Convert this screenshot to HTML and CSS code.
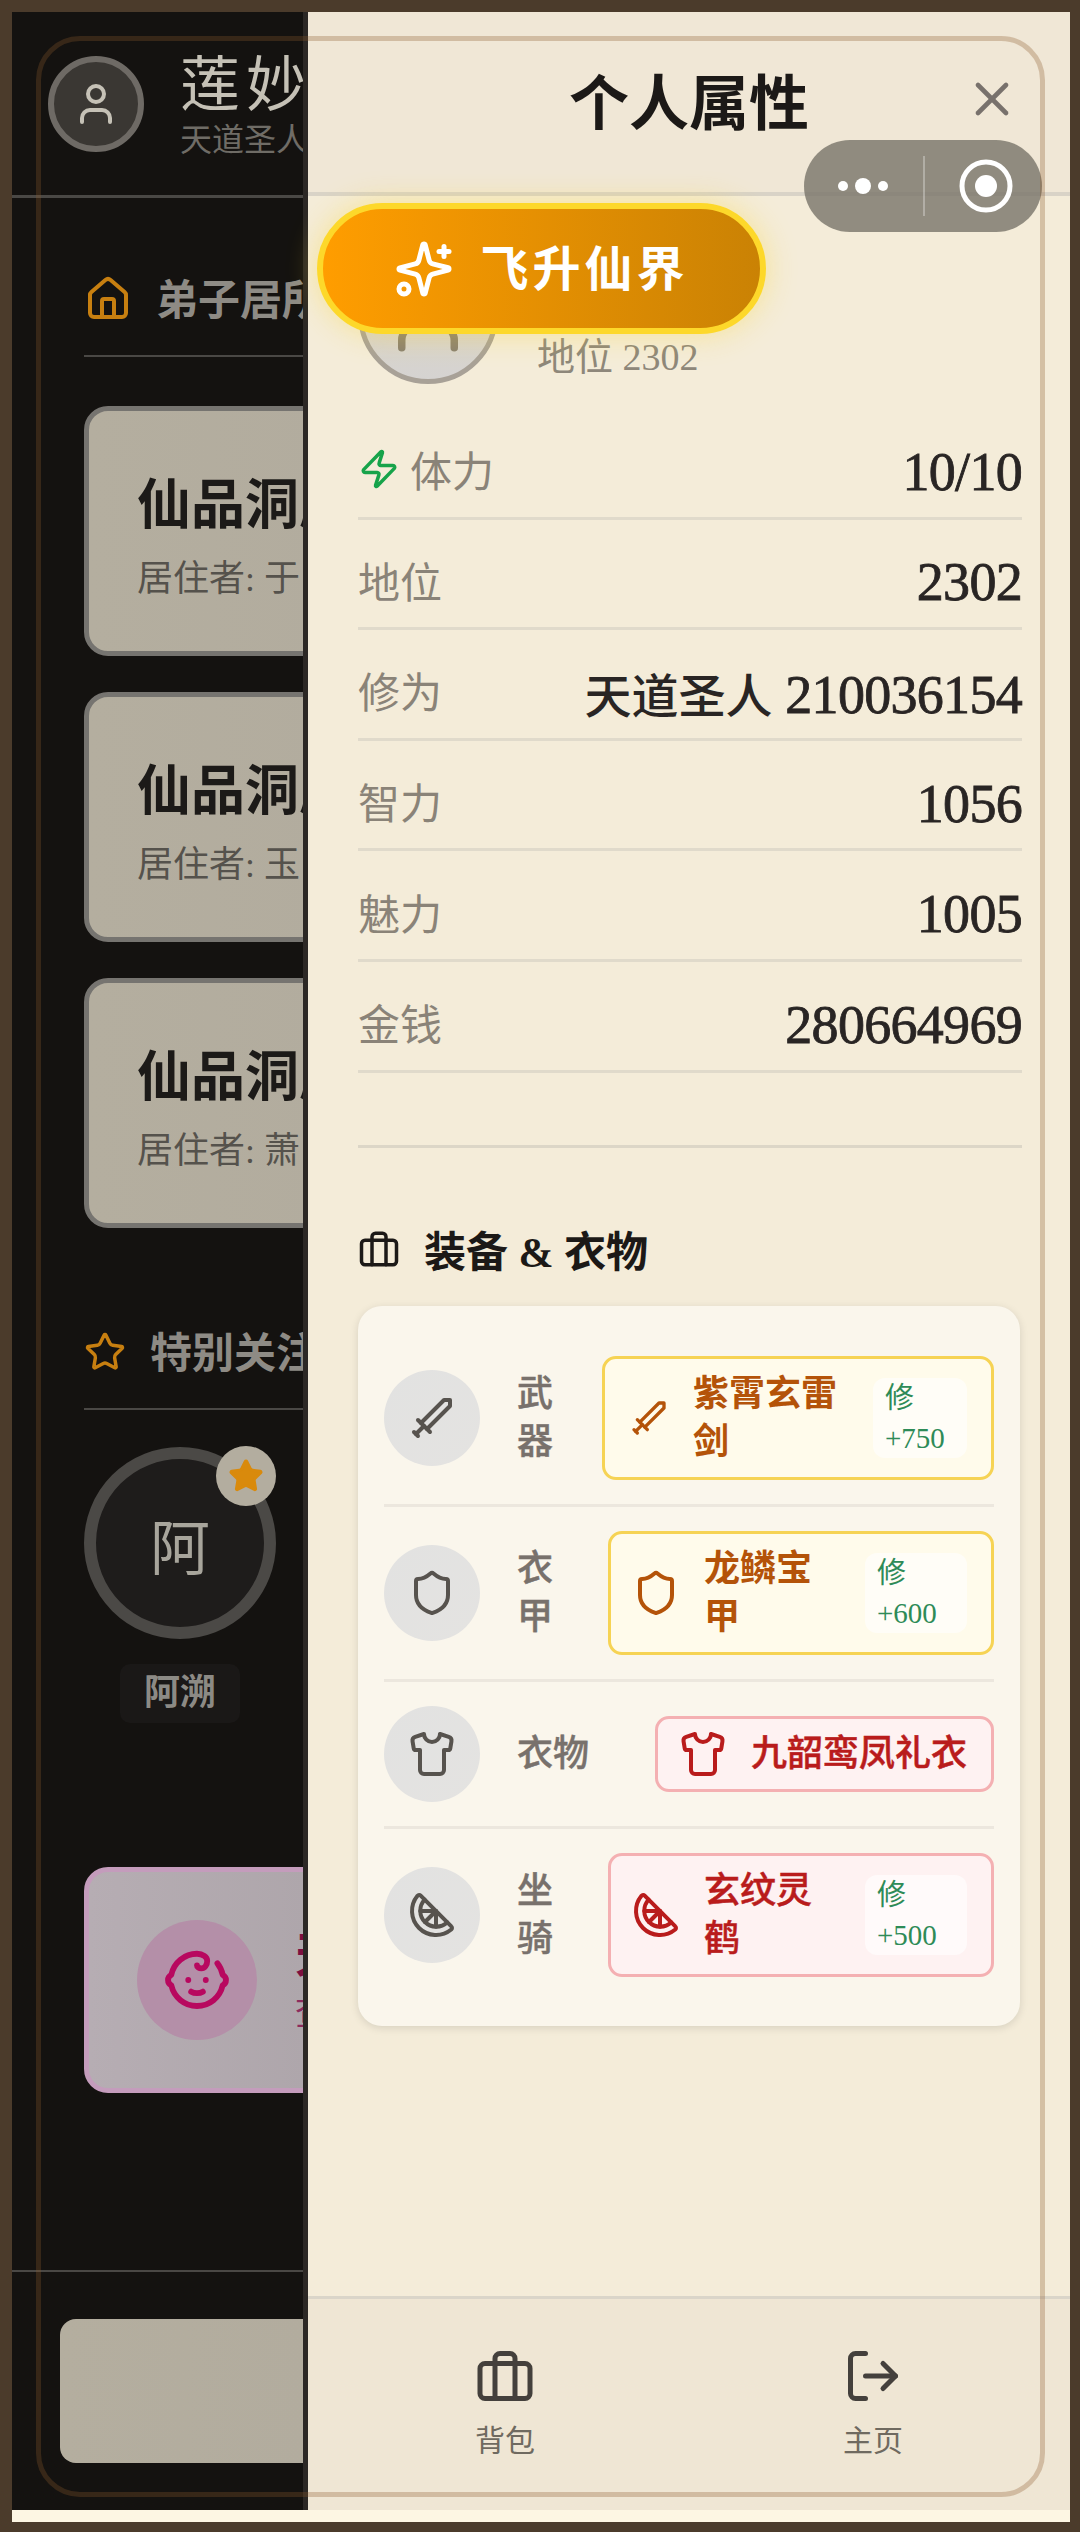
FILE: index.html
```html
<!DOCTYPE html>
<html lang="zh-CN">
<head>
    <meta charset="UTF-8">
    <meta name="viewport" content="width=device-width, initial-scale=1.0">
    <title>个人属性</title>
    <link rel="stylesheet" href="styles.css">
</head>
<body>
    <svg class="sprite" xmlns="http://www.w3.org/2000/svg">
        <symbol id="i-user" viewBox="0 0 24 24"><path d="M19 21v-2a4 4 0 0 0-4-4H9a4 4 0 0 0-4 4v2"/><circle cx="12" cy="7" r="4"/></symbol>
        <symbol id="i-home" viewBox="0 0 24 24"><path d="M15 21v-8a1 1 0 0 0-1-1h-4a1 1 0 0 0-1 1v8"/><path d="M3 10a2 2 0 0 1 .709-1.528l7-5.999a2 2 0 0 1 2.582 0l7 5.999A2 2 0 0 1 21 10v9a2 2 0 0 1-2 2H5a2 2 0 0 1-2-2z"/></symbol>
        <symbol id="i-star" viewBox="0 0 24 24"><path d="M11.525 2.295a.53.53 0 0 1 .95 0l2.31 4.679a2.123 2.123 0 0 0 1.595 1.16l5.166.756a.53.53 0 0 1 .294.904l-3.736 3.638a2.123 2.123 0 0 0-.611 1.878l.882 5.14a.53.53 0 0 1-.771.56l-4.618-2.428a2.122 2.122 0 0 0-1.973 0L6.396 21.01a.53.53 0 0 1-.77-.56l.881-5.139a2.122 2.122 0 0 0-.611-1.879L2.16 9.795a.53.53 0 0 1 .294-.906l5.165-.755a2.122 2.122 0 0 0 1.597-1.16z"/></symbol>
        <symbol id="i-baby" viewBox="0 0 24 24"><path d="M9 12h.01"/><path d="M15 12h.01"/><path d="M10 16c.5.3 1.2.5 2 .5s1.5-.2 2-.5"/><path d="M19 6.3a9 9 0 0 1 1.8 3.9 2 2 0 0 1 0 3.6 9 9 0 0 1-17.6 0 2 2 0 0 1 0-3.6A9 9 0 0 1 12 3c2 0 3.5 1.1 3.5 2.5s-.9 2.5-2 2.5c-.8 0-1.5-.4-1.5-1"/></symbol>
        <symbol id="i-close" viewBox="0 0 24 24"><path d="M18 6 6 18"/><path d="m6 6 12 12"/></symbol>
        <symbol id="i-sparkles" viewBox="0 0 24 24"><path d="M9.937 15.5A2 2 0 0 0 8.5 14.063l-6.135-1.582a.5.5 0 0 1 0-.962L8.5 9.936A2 2 0 0 0 9.937 8.5l1.582-6.135a.5.5 0 0 1 .963 0L14.063 8.5A2 2 0 0 0 15.5 9.937l6.135 1.581a.5.5 0 0 1 0 .964L15.5 14.063a2 2 0 0 0-1.437 1.437l-1.582 6.135a.5.5 0 0 1-.963 0z"/><path d="M20 3v4"/><path d="M22 5h-4"/><circle cx="4" cy="20" r="2"/></symbol>
        <symbol id="i-zap" viewBox="0 0 24 24"><path d="M4 14a1 1 0 0 1-.78-1.63l9.9-10.2a.5.5 0 0 1 .86.46l-1.92 6.02A1 1 0 0 0 13 10h7a1 1 0 0 1 .78 1.63l-9.9 10.2a.5.5 0 0 1-.86-.46l1.92-6.02A1 1 0 0 0 11 14z"/></symbol>
        <symbol id="i-briefcase" viewBox="0 0 24 24"><path d="M16 21V5a2 2 0 0 0-2-2h-4a2 2 0 0 0-2 2v16"/><rect x="2" y="7" width="20" height="14" rx="2"/></symbol>
        <symbol id="i-sword" viewBox="0 0 24 24"><g transform="matrix(-1 0 0 1 24 0)"><path d="M14.5 17.5 3 6V3h3l11.5 11.5"/><path d="m13 19 6-6"/><path d="m16 16 4 4"/><path d="m19 21 2-2"/></g></symbol>
        <symbol id="i-shield" viewBox="0 0 24 24"><path d="M20 13c0 5-3.5 7.5-7.66 8.95a1 1 0 0 1-.67-.01C7.5 20.5 4 18 4 13V6a1 1 0 0 1 1-1c2 0 4.5-1.2 6.24-2.72a1.17 1.17 0 0 1 1.52 0C14.51 3.81 17 5 19 5a1 1 0 0 1 1 1z"/></symbol>
        <symbol id="i-shirt" viewBox="0 0 24 24"><path d="M20.38 3.46 16 2a4 4 0 0 1-8 0L3.62 3.46a2 2 0 0 0-1.34 2.23l.58 3.47a1 1 0 0 0 .99.84H6v10c0 1.1.9 2 2 2h8a2 2 0 0 0 2-2V10h2.15a1 1 0 0 0 .99-.84l.58-3.47a2 2 0 0 0-1.34-2.23z"/></symbol>
        <symbol id="i-citrus" viewBox="0 0 24 24"><path d="M21.66 17.67a1.08 1.08 0 0 1-.04 1.6A12 12 0 0 1 4.73 2.38a1.1 1.1 0 0 1 1.61-.04z"/><path d="M19.65 15.66A8 8 0 0 1 8.35 4.34"/><path d="m14 10-5.5 5.5"/><path d="M14 17.85V10H6.15"/></symbol>
        <symbol id="i-logout" viewBox="0 0 24 24"><path d="M9 21H5a2 2 0 0 1-2-2V5a2 2 0 0 1 2-2h4"/><path d="m16 17 5-5-5-5"/><path d="M21 12H9"/></symbol>
    </svg>

    <div class="screen">
        <!-- page behind the dialog -->
        <div class="behind">
            <div class="top">
                <div class="top-avatar"><svg class="icon"><use href="#i-user"/></svg></div>
                <div>
                    <div class="top-name">莲妙音</div>
                    <div class="top-rank">天道圣人</div>
                </div>
            </div>

            <div class="behind-head">
                <svg class="icon icon-home"><use href="#i-home"/></svg>
                <span>弟子居所</span>
            </div>
            <div class="cave-list">
                <div class="cave">
                    <h3>仙品洞府</h3>
                    <p>居住者: 于</p>
                </div>
                <div class="cave">
                    <h3>仙品洞府</h3>
                    <p>居住者: 玉</p>
                </div>
                <div class="cave">
                    <h3>仙品洞府</h3>
                    <p>居住者: 萧</p>
                </div>
            </div>

            <div class="behind-head head-star">
                <svg class="icon icon-star"><use href="#i-star"/></svg>
                <span>特别关注</span>
            </div>
            <div class="follow">
                <div class="follow-circle">
                    阿
                    <span class="follow-badge"><svg class="icon"><use href="#i-star"/></svg></span>
                </div>
                <div class="follow-name">阿溯</div>
            </div>

            <div class="child-card">
                <div class="child-icon"><svg class="icon"><use href="#i-baby"/></svg></div>
                <div>
                    <div class="child-title">天赐子嗣</div>
                    <div class="child-sub">查看详情</div>
                </div>
            </div>

            <div class="behind-foot">
                <div class="behind-btn"></div>
            </div>
        </div>

        <!-- dialog -->
        <div class="modal">
            <div class="modal-head">
                <span></span>
                <h2>个人属性</h2>
                <svg class="icon close"><use href="#i-close"/></svg>
            </div>

            <div class="modal-body">
                <div class="profile">
                    <div class="profile-avatar"><svg class="icon"><use href="#i-user"/></svg></div>
                    <div class="profile-rank">地位 2302</div>
                </div>

                <div class="stat">
                    <span class="stat-label"><svg class="icon icon-zap"><use href="#i-zap"/></svg>体力</span>
                    <span class="stat-value">10/10</span>
                </div>
                <div class="stat">
                    <span class="stat-label">地位</span>
                    <span class="stat-value">2302</span>
                </div>
                <div class="stat">
                    <span class="stat-label">修为</span>
                    <span class="stat-value"><span class="stat-cjk">天道圣人</span> 210036154</span>
                </div>
                <div class="stat">
                    <span class="stat-label">智力</span>
                    <span class="stat-value">1056</span>
                </div>
                <div class="stat">
                    <span class="stat-label">魅力</span>
                    <span class="stat-value">1005</span>
                </div>
                <div class="stat">
                    <span class="stat-label">金钱</span>
                    <span class="stat-value">280664969</span>
                </div>

                <div class="rule"></div>

                <div class="gear-head">
                    <svg class="icon"><use href="#i-briefcase"/></svg>
                    <span>装备 &amp; 衣物</span>
                </div>

                <div class="gear-card">
                    <div class="slot">
                        <div class="slot-icon"><svg class="icon"><use href="#i-sword"/></svg></div>
                        <div class="slot-label">武器</div>
                        <div class="item item-gold item-w1">
                            <svg class="icon item-icon-small"><use href="#i-sword"/></svg>
                            <div class="item-name">紫霄玄雷剑</div>
                            <div class="bonus">修 +750</div>
                        </div>
                    </div>
                    <div class="slot">
                        <div class="slot-icon"><svg class="icon"><use href="#i-shield"/></svg></div>
                        <div class="slot-label">衣甲</div>
                        <div class="item item-gold item-w2">
                            <svg class="icon"><use href="#i-shield"/></svg>
                            <div class="item-name">龙鳞宝甲</div>
                            <div class="bonus bonus-wide">修 +600</div>
                        </div>
                    </div>
                    <div class="slot">
                        <div class="slot-icon"><svg class="icon"><use href="#i-shirt"/></svg></div>
                        <div class="slot-label slot-label-line">衣物</div>
                        <div class="item item-red">
                            <svg class="icon"><use href="#i-shirt"/></svg>
                            <div class="item-name item-name-line">九韶鸾凤礼衣</div>
                        </div>
                    </div>
                    <div class="slot">
                        <div class="slot-icon"><svg class="icon"><use href="#i-citrus"/></svg></div>
                        <div class="slot-label">坐骑</div>
                        <div class="item item-red item-w2">
                            <svg class="icon"><use href="#i-citrus"/></svg>
                            <div class="item-name">玄纹灵鹤</div>
                            <div class="bonus bonus-wide">修 +500</div>
                        </div>
                    </div>
                </div>
            </div>

            <div class="modal-foot">
                <div class="tab">
                    <svg class="icon"><use href="#i-briefcase"/></svg>
                    <span>背包</span>
                </div>
                <div class="tab">
                    <svg class="icon"><use href="#i-logout"/></svg>
                    <span>主页</span>
                </div>
            </div>
        </div>

        <!-- things lying over the page -->
        <div class="fly-btn">
            <svg class="icon"><use href="#i-sparkles"/></svg>
            <span>飞升仙界</span>
        </div>

        <div class="capsule">
            <svg class="capsule-dots" viewBox="0 0 60 20"><circle cx="7" cy="10" r="5"/><circle cx="27" cy="10" r="8"/><circle cx="47" cy="10" r="5"/></svg>
            <span class="capsule-line"></span>
            <svg class="capsule-target" viewBox="0 0 56 56"><circle class="target-ring" cx="28" cy="28" r="24"/><circle cx="28" cy="28" r="11"/></svg>
        </div>

        <div class="gold-frame"></div>
    </div>
</body>
</html>
```

FILE: styles.css
```css
* {
    box-sizing: border-box;
}
html, body {
    height: 2532px;
}
body {
    margin: 0;
    border-style: solid;
    border-color: #4b3b2b;
    border-width: 12px 10px 10px 12px;
    background: #fdf6e3;
    font-family: "Liberation Serif", "Noto Sans CJK SC", serif;
    overflow: hidden;
}
h2, h3, p {
    margin: 0;
}
.sprite {
    display: none;
}
.icon {
    width: 48px;
    height: 48px;
    flex-shrink: 0;
    fill: none;
    stroke: currentColor;
    stroke-width: 2;
    stroke-linecap: round;
    stroke-linejoin: round;
}
.screen {
    position: relative;
    display: flex;
    height: 2498px;
}

/* page behind the dialog */
.behind {
    display: flex;
    flex-direction: column;
    width: 291px;
    flex-shrink: 0;
    background: #141210;
    overflow: hidden;
}
.top {
    display: flex;
    gap: 36px;
    width: 600px;
    height: 186px;
    padding: 38px 0 0 36px;
    border-bottom: 3px solid #4a4845;
}
.top-avatar {
    display: flex;
    align-items: center;
    justify-content: center;
    width: 96px;
    height: 96px;
    margin-top: 6px;
    border: 6px solid #6e6a65;
    border-radius: 50%;
    background: #3a3733;
    color: #c5c1b6;
}
.top-name {
    font-size: 60px;
    line-height: 72px;
    letter-spacing: 6px;
    color: #c5c1b6;
    white-space: nowrap;
}
.top-rank {
    font-size: 32px;
    line-height: 36px;
    color: #6f6c66;
}
.behind-head {
    display: flex;
    align-items: center;
    gap: 24px;
    flex-shrink: 0;
    width: 600px;
    height: 106px;
    margin: 53px 0 0 72px;
    padding-bottom: 8px;
    border-bottom: 2px solid #4a4845;
    font-size: 42px;
    font-weight: 700;
    color: #8e8b85;
}
.behind-head span {
    margin-bottom: 6px;
}
.icon-home {
    color: #c77f10;
}
.head-star {
    margin-top: 76px;
}
.icon-star {
    width: 42px;
    height: 42px;
    color: #c77f10;
}
.cave-list {
    display: flex;
    flex-direction: column;
    gap: 36px;
    margin: 49px 0 0 72px;
}
.cave {
    width: 500px;
    height: 250px;
    padding: 61px 48px 0;
    border: 5px solid #767470;
    border-radius: 24px;
    background: linear-gradient(90deg, #b4ae9f 0%, #b2ac9e 50%, #96918a 100%);
}
.cave h3 {
    font-size: 54px;
    line-height: 68px;
    color: #1c1a18;
}
.cave p {
    margin-top: 17px;
    font-size: 36px;
    line-height: 44px;
    color: #55524c;
}
.follow {
    display: flex;
    flex-direction: column;
    align-items: center;
    width: 192px;
    margin: 37px 0 0 72px;
}
.follow-circle {
    position: relative;
    display: flex;
    align-items: center;
    justify-content: center;
    width: 192px;
    height: 192px;
    border: 12px solid #4b4946;
    border-radius: 50%;
    background: #1e1c1b;
    font-size: 60px;
    color: #a8a59c;
}
.follow-badge {
    position: absolute;
    top: -13px;
    right: -12px;
    display: flex;
    align-items: center;
    justify-content: center;
    width: 60px;
    height: 60px;
    border-radius: 50%;
    background: #b3ad9f;
    color: #d98a0c;
}
.follow-badge .icon {
    width: 36px;
    height: 36px;
    fill: currentColor;
}
.follow-name {
    width: 120px;
    height: 59px;
    margin-top: 25px;
    border-radius: 10px;
    background: #1a1817;
    font-size: 36px;
    font-weight: 700;
    line-height: 59px;
    text-align: center;
    color: #8c8a85;
}
.child-card {
    display: flex;
    align-items: center;
    gap: 38px;
    flex-shrink: 0;
    width: 500px;
    height: 226px;
    margin: 144px 0 0 72px;
    padding-left: 48px;
    border: 5px solid #c49cbc;
    border-radius: 24px;
    background: linear-gradient(90deg, #b6adb3 0%, #ada5aa 50%, #98938f 100%);
}
.child-icon {
    display: flex;
    align-items: center;
    justify-content: center;
    flex-shrink: 0;
    width: 120px;
    height: 120px;
    border-radius: 50%;
    background: #b48fa8;
    color: #b8085f;
}
.child-icon .icon {
    width: 70px;
    height: 70px;
}
.child-title {
    font-size: 48px;
    font-weight: 700;
    line-height: 60px;
    color: #7d0f3f;
    white-space: nowrap;
}
.child-sub {
    margin-top: 8px;
    font-size: 34px;
    line-height: 40px;
    color: #8d2b5c;
    white-space: nowrap;
}
.behind-foot {
    flex-shrink: 0;
    margin-top: auto;
    width: 600px;
    height: 240px;
    padding: 47px 0 0 48px;
    border-top: 2px solid #4a4845;
}
.behind-btn {
    width: 500px;
    height: 144px;
    border-radius: 16px;
    background: linear-gradient(90deg, #b4ae9f 0%, #b2ac9e 50%, #9b968a 100%);
}

/* dialog */
.modal {
    display: flex;
    flex-direction: column;
    flex: 1;
    border-left: 5px solid #2c2825;
    background: #f4ecd9;
}
.modal-head {
    display: grid;
    grid-template-columns: 1fr auto 1fr;
    align-items: center;
    flex-shrink: 0;
    height: 184px;
    padding: 0 50px 6px;
    border-bottom: 4px solid #d9d3c7;
    background: #f0e7d6;
}
.modal-head h2 {
    font-family: "Noto Sans CJK SC", sans-serif;
    font-size: 60px;
    font-weight: 700;
    line-height: 72px;
    color: #1c1917;
}
.close {
    justify-self: end;
    width: 56px;
    height: 56px;
    color: #78716c;
}
.modal-body {
    flex: 1;
    padding: 48px 48px 0 50px;
}
.profile {
    display: flex;
    align-items: flex-end;
    height: 140px;
    margin-bottom: 25px;
}
.profile-avatar {
    display: flex;
    align-items: center;
    justify-content: center;
    flex-shrink: 0;
    width: 140px;
    height: 140px;
    margin-right: 39px;
    border: 5px solid #a8a197;
    border-radius: 50%;
    background: linear-gradient(180deg, #e0d6c5, #d5d3d1);
    color: #8a8170;
}
.profile-avatar .icon {
    width: 90px;
    height: 90px;
}
.profile-rank {
    padding-bottom: 5px;
    font-size: 38px;
    line-height: 44px;
    color: #8e877a;
}
.stat {
    display: flex;
    align-items: center;
    justify-content: space-between;
    height: 110.6px;
    padding-top: 12px;
    border-bottom: 3px solid #e0dacb;
}
.stat-label {
    display: flex;
    align-items: center;
    gap: 10px;
    font-size: 42px;
    color: #8a8378;
}
.icon-zap {
    width: 42px;
    height: 42px;
    color: #16a34a;
}
.stat-value {
    margin-top: 6px;
    font-size: 54px;
    letter-spacing: -0.7px;
    color: #292524;
    -webkit-text-stroke: 0.8px #292524;
}
.stat-cjk {
    font-size: 47px;
    letter-spacing: 0;
    font-weight: 500;
    -webkit-text-stroke: 0;
}
.rule {
    height: 3px;
    margin-top: 72px;
    background: #dcd6c7;
}
.gear-head {
    display: flex;
    align-items: center;
    gap: 24px;
    margin-top: 71px;
    height: 60px;
    font-size: 42px;
    font-weight: 700;
    color: #1c1917;
}
.gear-head .icon {
    width: 42px;
    height: 42px;
}
.gear-card {
    width: 662px;
    margin-top: 27px;
    padding: 26px 26px 25px;
    border-radius: 24px;
    background: #faf6ec;
    box-shadow: 0 2px 8px rgba(0, 0, 0, 0.12);
}
.slot {
    display: flex;
    align-items: center;
    padding: 24px 0;
    border-bottom: 3px solid #ece7de;
}
.slot:last-child {
    border-bottom: none;
}
.slot-icon {
    display: flex;
    align-items: center;
    justify-content: center;
    flex-shrink: 0;
    width: 96px;
    height: 96px;
    margin-right: 37px;
    border-radius: 50%;
    background: linear-gradient(135deg, #e2e2e1, #e4e3e1);
    color: #57534e;
}
.slot-label {
    width: 38px;
    font-size: 36px;
    font-weight: 500;
    line-height: 48px;
    color: #78716c;
    -webkit-text-stroke: 0.4px #78716c;
}
.slot-label-line {
    width: auto;
    white-space: nowrap;
}
.item {
    display: flex;
    align-items: center;
    gap: 24px;
    margin-left: auto;
    padding: 0 24px 0 21px;
    border: 3px solid;
    border-radius: 14px;
}
.item-gold {
    border-color: #f6d354;
    background: #fffbeb;
    color: #b45309;
}
.item-red {
    border-color: #f4b0b2;
    background: #fef2f2;
    color: #b91c1c;
    min-height: 76px;
}
.item-w1 {
    width: 392px;
    height: 124px;
}
.item-w2 {
    width: 386px;
    height: 124px;
}
.item-icon-small {
    width: 40px;
    height: 40px;
    margin-left: 3px;
}
.item-name {
    flex: 1;
    font-size: 36px;
    font-weight: 700;
    line-height: 48px;
    word-break: break-all;
}
.item-red .item-name {
    font-weight: 500;
    -webkit-text-stroke: 0.5px #b91c1c;
}
.item-name-line {
    white-space: nowrap;
}
.bonus {
    flex-shrink: 0;
    width: 94px;
    height: 80px;
    padding: 0 12px;
    border-radius: 12px;
    background: rgba(255, 255, 255, 0.6);
    font-size: 29px;
    line-height: 40px;
    color: #2e8b57;
}
.bonus-wide {
    width: 102px;
}
.modal-foot {
    display: flex;
    justify-content: space-between;
    flex-shrink: 0;
    height: 214px;
    padding: 47px 117px 0;
    border-top: 3px solid #dad5c9;
    background: #efe6d4;
}
.tab {
    display: flex;
    flex-direction: column;
    align-items: center;
    gap: 15px;
    width: 160px;
    font-size: 30px;
    line-height: 40px;
    color: #6f6a60;
}
.tab .icon {
    width: 60px;
    height: 60px;
    color: #44403c;
}

/* lies over the page */
.fly-btn {
    position: absolute;
    top: 191px;
    left: 305px;
    display: flex;
    align-items: center;
    justify-content: center;
    gap: 26px;
    width: 449px;
    height: 131px;
    border: 6px solid #fdd82a;
    border-radius: 66px;
    background: linear-gradient(90deg, #ff9d00, #ca8204);
    box-shadow: 0 0 30px rgba(253, 215, 42, 0.4);
    color: #fff;
    font-size: 48px;
    font-weight: 700;
    letter-spacing: 4px;
}
.fly-btn span {
    margin-bottom: 8px;
}
.fly-btn .icon {
    width: 60px;
    height: 60px;
}
.capsule {
    position: absolute;
    top: 128px;
    left: 792px;
    display: flex;
    align-items: center;
    width: 238px;
    height: 92px;
    border-radius: 46px;
    background: rgba(120, 116, 105, 0.8);
}
.capsule-dots {
    width: 60px;
    height: 20px;
    margin-left: 32px;
    fill: #fff;
}
.capsule-line {
    width: 2px;
    height: 60px;
    margin-left: 27px;
    background: rgba(255, 255, 255, 0.3);
}
.capsule-target {
    width: 56px;
    height: 56px;
    margin-left: 33px;
    fill: #fff;
}
.target-ring {
    fill: none;
    stroke: #fff;
    stroke-width: 5;
}
.gold-frame {
    position: absolute;
    top: 24px;
    left: 24px;
    width: 1009px;
    height: 2461px;
    border: 5px solid rgba(139, 90, 43, 0.3);
    border-radius: 44px;
    pointer-events: none;
}
```
